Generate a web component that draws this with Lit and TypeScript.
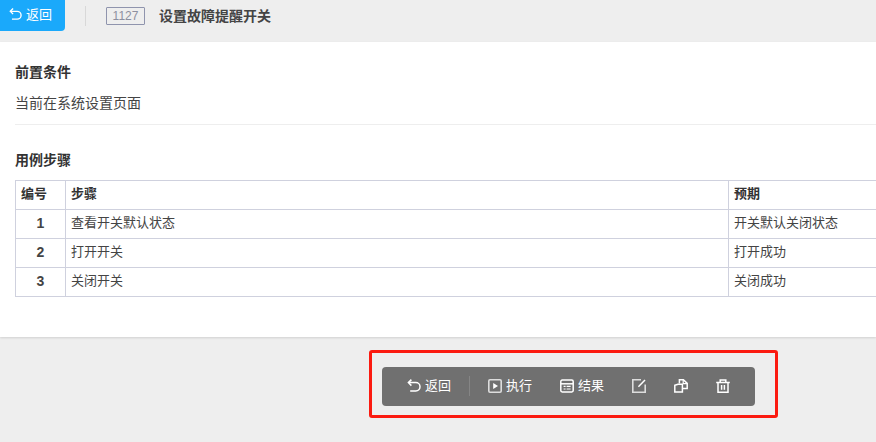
import { LitElement, html, css, svg } from "lit";
import { customElement } from "lit/decorators.js";

const I = (body: unknown, cls = "ic") => html`<svg class=${cls} viewBox="0 0 14 14" fill="none" stroke="currentColor" stroke-width="1.5">${body}</svg>`;
const backIcon = svg`<path d="M4.4 .6 1.4 3.6l3 3"/><path d="M1.8 3.6h7a4.1 4.1 0 0 1 0 8.4H3.2"/>`;
const playIcon = svg`<rect x=".8" y=".8" width="12.4" height="12.4" rx="1.2" stroke="#ddd" stroke-width="1.6"/><path d="M5.2 4v6L10 7z" fill="currentColor" stroke="none"/>`;
const resultIcon = svg`<rect x=".8" y="1" width="12.4" height="12" rx="1.4"/><path d="M1 4.8h12" /><path stroke-width="1.2" d="M3.6 7.4h2M6.6 7.4h4M3.6 10h2M6.6 10h4"/>`;
const editIcon = svg`<path d="M9 .8H.8v12.4h12.4V5.5" stroke="#ddd" stroke-width="1.6"/><path d="M13 1 6.4 7.8"/>`;
const copyIcon = svg`<path d="M5.4 4.4V.8h4L13.2 4.4V9.6H9"/><path d="M9.2 .8v3.8h4" stroke-width="1.2"/><path d="M.8 6.2 4 5.2h4.4V13H.8z"/>`;
const trashIcon = svg`<path d="M.2 3.4h13.6M4.2 3V.9h5.6V3M2 3.6V13.2h10V3.6M5.6 6v4.8M8.4 6v4.8"/>`;

const rows = [
  ["1", "查看开关默认状态", "开关默认关闭状态"],
  ["2", "打开开关", "打开成功"],
  ["3", "关闭开关", "关闭成功"],
];

@customElement("app-root")
export class AppRoot extends LitElement {
  static styles = css`
    :host {
      display: block;
      position: relative;
      width: 876px;
      height: 442px;
      overflow: hidden;
      background: #eee;
      color: #333;
      font: 14px/20px "Liberation Sans", "Noto Sans CJK SC", sans-serif;
    }
    .head { display: flex; align-items: center; height: 42px; box-sizing: border-box; padding-bottom: 10px; }
    .back {
      display: flex; align-items: center; gap: 4px;
      align-self: flex-start;
      width: 65px; height: 31px; padding: 0 0 2px 9px;
      box-sizing: border-box;
      background: #1aa9fb; color: #fff; border-radius: 0 0 4px 0;
      font-size: 13px;
    }
    .back .ic { width: 13px; height: 13px; }
    .sep { width: 1px; height: 20px; margin: 0 20px; background: #d8d8d8; }
    .id {
      width: 37px; height: 16px; margin-right: 14px;
      border: 1px solid #8f94ad; border-radius: 1px; color: #8d90a0;
      text-align: center; font-size: 12px; line-height: 16px;
    }
    .title { font-weight: 700; color: #444; }
    .panel {
      height: 295px; box-sizing: border-box; background: #fff;
      padding: 20px 0 0 15px;
      box-shadow: 0 1px 2px rgba(0,0,0,.12);
    }
    h3 { margin: 0; font-size: 14px; line-height: 20px; font-weight: 700; color: #333; }
    .pre { margin-top: 11px; padding-bottom: 11px; border-bottom: 1px solid #eee; color: #444; }
    .steps { margin-top: 25px; }
    table {
      margin-top: 10px; width: 1000px; table-layout: fixed;
      border-collapse: collapse; font-size: 13px;
    }
    td, th {
      height: 26px; padding: 0 5px 2px; box-sizing: content-box; border: 1px solid #cfd1de;
      text-align: left; font-weight: 400; color: #444;
    }
    th { font-weight: 700; color: #333; }
    .num { text-align: center; font-weight: 700; font-size: 14px; }
    .foot { display: flex; padding: 30px 0 0 382px; }
    .bar {
      display: flex; align-items: center; gap: 28px; width: 373px; height: 39px;
      box-sizing: border-box; padding: 0 0 2px 25px;
      background: #707070; color: #fff; border-radius: 4px;
      font-size: 13px;
    }
    .item { display: flex; align-items: center; gap: 4px; }
    .bar .ic { width: 14px; height: 14px; }
    .back-group { display: flex; align-items: center; gap: 18px; margin-right: -10px; }
    .div { width: 1px; height: 20px; background: #858585; }
    .hl {
      position: absolute; left: 369px; top: 350px; width: 409px; height: 68px;
      box-sizing: border-box; border: 3px solid #fb1a10; border-radius: 3px;
    }
  `;

  render() {
    return html`
      <div class="head">
        <div class="back">${I(backIcon)}<span>返回</span></div>
        <div class="sep"></div>
        <div class="id">1127</div>
        <div class="title">设置故障提醒开关</div>
      </div>
      <div class="panel">
        <h3>前置条件</h3>
        <div class="pre">当前在系统设置页面</div>
        <h3 class="steps">用例步骤</h3>
        <table>
          <colgroup><col style="width:50px" /><col style="width:663px" /><col /></colgroup>
          <tr><th>编号</th><th>步骤</th><th>预期</th></tr>
          ${rows.map(r => html`<tr><td class="num">${r[0]}</td><td>${r[1]}</td><td>${r[2]}</td></tr>`)}
        </table>
      </div>
      <div class="foot">
        <div class="bar">
          <div class="back-group">
            <div class="item">${I(backIcon)}<span>返回</span></div>
            <div class="div"></div>
          </div>
          <div class="item">${I(playIcon)}<span>执行</span></div>
          <div class="item">${I(resultIcon)}<span>结果</span></div>
          <div class="item">${I(editIcon)}</div>
          <div class="item">${I(copyIcon)}</div>
          <div class="item">${I(trashIcon)}</div>
        </div>
      </div>
      <div class="hl"></div>
    `;
  }
}
